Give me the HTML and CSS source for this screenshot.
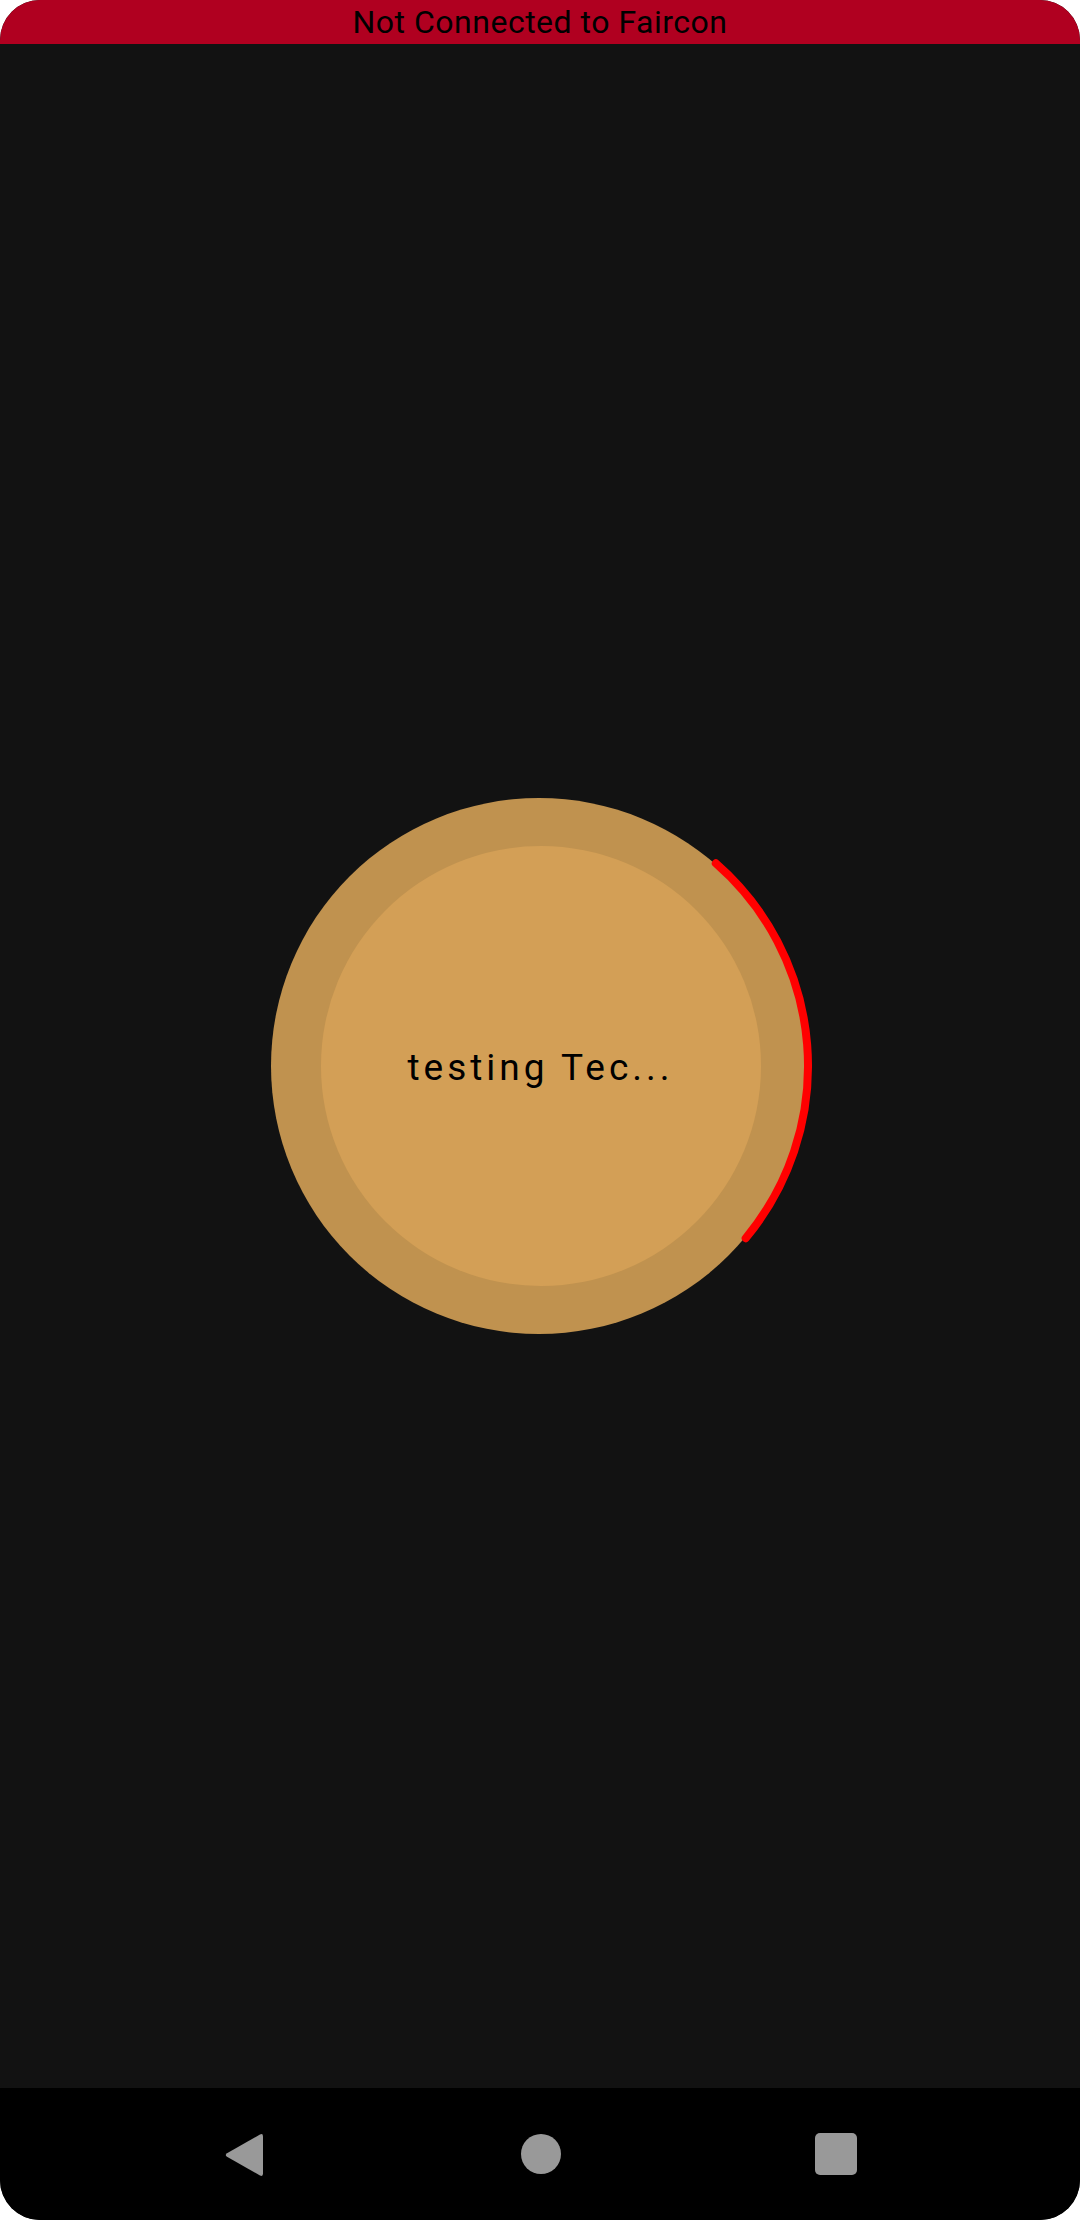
FILE: index.html
```html
<!DOCTYPE html>
<html>
<head>
<meta charset="utf-8">
<link rel="stylesheet" href="styles.css">
</head>
<body>
<div class="screen">
  <header class="status-bar">Not Connected to Faircon</header>
  <main class="content">
    <div class="dial">
      <div class="dial-inner">
        <span class="dial-label">testing Tec...</span>
      </div>
      <svg class="dial-arc" width="560" height="560" viewBox="0 0 560 560">
        <path d="M456.8 77.3 A269 269 0 0 1 486.7 452.2" fill="none" stroke="#ff0000" stroke-width="8" stroke-linecap="round"/>
      </svg>
    </div>
  </main>
  <nav class="nav-bar">
    <svg class="nav-back" width="40" height="46" viewBox="0 0 40 46">
      <path d="M36 2.5 Q39 1 39 4.5 L39 41.5 Q39 45 36 43.5 L3 24.8 Q0.5 23 3 21.2 Z" fill="#999999"/>
    </svg>
    <span class="nav-home"></span>
    <span class="nav-recent"></span>
  </nav>
</div>
</body>
</html>
```

FILE: styles.css
```css
html, body {
  margin: 0;
  padding: 0;
  background: #ffffff;
}

.screen {
  width: 1080px;
  height: 2220px;
  display: flex;
  flex-direction: column;
  background: #121212;
  border-radius: 40px;
  overflow: hidden;
  font-family: Roboto, "Noto Sans", sans-serif;
}

.status-bar {
  height: 44px;
  flex: 0 0 44px;
  background: #b00020;
  color: #000000;
  font-size: 32px;
  line-height: 44px;
  text-align: center;
  letter-spacing: 0.5px;
}

.content {
  flex: 1 1 auto;
  display: flex;
  align-items: center;
  justify-content: center;
}

.dial {
  position: relative;
  width: 536px;
  height: 536px;
  border-radius: 50%;
  background: #c0924f;
  display: flex;
  align-items: center;
  justify-content: center;
  margin-left: -3px;
}

.dial-inner {
  width: 440px;
  height: 440px;
  border-radius: 50%;
  background: #d39f56;
  display: flex;
  align-items: center;
  justify-content: center;
  margin-left: 4px;
}

.dial-label {
  font-size: 37px;
  letter-spacing: 4px;
  color: #000000;
  margin-top: 2px;
}

.dial-arc {
  position: absolute;
  left: -12px;
  top: -12px;
}

.nav-bar {
  flex: 0 0 132px;
  height: 132px;
  background: #000000;
  display: flex;
  align-items: center;
  padding-left: 224px;
}

.nav-back {
  display: block;
  margin-top: 2px;
}

.nav-home {
  width: 40px;
  height: 40px;
  border-radius: 50%;
  background: #999999;
  margin-left: 257px;
}

.nav-recent {
  width: 42px;
  height: 42px;
  border-radius: 5px;
  background: #999999;
  margin-left: 254px;
}
```
